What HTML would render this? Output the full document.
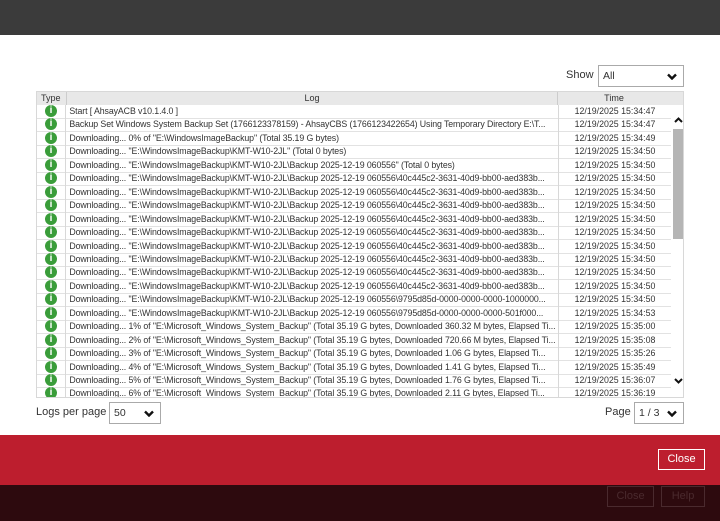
<!DOCTYPE html><html><head><style>
*{margin:0;padding:0;box-sizing:border-box}
body{width:720px;height:521px;overflow:hidden;background:#fff;font-family:"Liberation Sans",sans-serif;position:relative}
.top{position:absolute;left:0;top:0;width:720px;height:35px;background:#3b3b3b}
.red{position:absolute;left:0;top:435px;width:720px;height:50px;background:#bd1e2e}
.dark{position:absolute;left:0;top:485px;width:720px;height:36px;background:#2d0a0e}
.btn{position:absolute;font-size:11px;text-align:center}
.tbl{position:absolute;left:36px;top:91px;width:648px;height:307px;border:1px solid #d8d8d8;overflow:hidden}
.row{position:absolute;left:0;height:14px;width:634px;font-size:8.8px;line-height:13px;color:#333;border-bottom:1px solid #e2e2e2;white-space:nowrap}
.row .t{position:absolute;left:0;width:29px;height:14px;border-right:1px solid #d8d8d8}
.row .l{position:absolute;left:30px;width:490px;overflow:hidden;height:13px;letter-spacing:-0.1px}
.row .tm{position:absolute;left:521px;width:113px;text-align:center;border-left:1px solid #d8d8d8;height:14px}
.ic{position:absolute;left:8px;top:0px;width:12px;height:12px;border-radius:50%;background:#3a9d3a;color:#fff;font-size:10px;font-weight:bold;line-height:12px;text-align:center}
.hdr{position:absolute;left:0;top:0;width:656px;height:13px;background:#e8e8e8;font-size:9px;line-height:13px;color:#333}
.sel{position:absolute;border:1px solid #aaa;font-size:10.5px;color:#333;padding-left:4px;background:#fff}
.sel svg{position:absolute;right:6px;top:7px}
</style></head><body>
<div class="top"></div>
<div style="position:absolute;left:566px;top:69px;font-size:11px;color:#333">Show</div>
<div class="sel" style="left:598px;top:65px;width:86px;height:22px;line-height:20px">All<svg width="10" height="7" viewBox="0 0 10 7"><path d="M1 1.5L5 5.5L9 1.5" stroke="#111" stroke-width="2.4" fill="none"/></svg></div>
<div class="tbl">
<div class="hdr"><span style="position:absolute;left:4px">Type</span><span style="position:absolute;left:29px;width:491px;text-align:center;border-left:1px solid #ccc">Log</span><span style="position:absolute;left:520px;width:113px;text-align:center;border-left:1px solid #ccc">Time</span></div>
<div id="rows"></div>
<div style="position:absolute;left:634px;top:13px;width:14px;height:294px;background:#fff"></div>
<svg style="position:absolute;left:637px;top:25px" width="9" height="6" viewBox="0 0 9 6"><path d="M1 5L4.5 1.5L8 5" stroke="#111" stroke-width="2" fill="none"/></svg>
<div style="position:absolute;left:636px;top:37px;width:11px;height:110px;background:#b5b5b5"></div>
<svg style="position:absolute;left:637px;top:286px" width="9" height="6" viewBox="0 0 9 6"><path d="M1 1L4.5 4.5L8 1" stroke="#111" stroke-width="2" fill="none"/></svg>
</div>
<div style="position:absolute;left:36px;top:406px;font-size:11px;color:#333">Logs per page</div>
<div class="sel" style="left:109px;top:402px;width:52px;height:22px;line-height:20px">50<svg width="10" height="7" viewBox="0 0 10 7"><path d="M1 1.5L5 5.5L9 1.5" stroke="#111" stroke-width="2.4" fill="none"/></svg></div>
<div style="position:absolute;left:605px;top:406px;font-size:11px;color:#333">Page</div>
<div class="sel" style="left:634px;top:402px;width:50px;height:22px;line-height:20px">1 / 3<svg width="10" height="7" viewBox="0 0 10 7"><path d="M1 1.5L5 5.5L9 1.5" stroke="#111" stroke-width="2.4" fill="none"/></svg></div>
<div class="red"></div>
<div class="btn" style="left:658px;top:449px;width:47px;height:21px;border:1px solid #fff;color:#fff;line-height:19px">Close</div>
<div class="dark"></div>
<div class="btn" style="left:607px;top:486px;width:47px;height:21px;border:1px solid #4a2a2e;color:#4a2a2e;line-height:19px">Close</div>
<div class="btn" style="left:661px;top:486px;width:44px;height:21px;border:1px solid #4a2a2e;color:#4a2a2e;line-height:19px">Help</div>
<script>
var K='Downloading... "E:\\WindowsImageBackup\\KMT-W10-2JL\\Backup 2025-12-19 060556\\';
var M='Downloading... ',S='% of "E:\\Microsoft_Windows_System_Backup" (Total 35.19 G bytes, Downloaded ';
var d=[
['Start [ AhsayACB v10.1.4.0 ]','34:47'],
['Backup Set Windows System Backup Set (1766123378159) - AhsayCBS (1766123422654) Using Temporary Directory E:\\T...','34:47'],
['Downloading... 0% of "E:\\WindowsImageBackup" (Total 35.19 G bytes)','34:49'],
['Downloading... "E:\\WindowsImageBackup\\KMT-W10-2JL" (Total 0 bytes)','34:50'],
['Downloading... "E:\\WindowsImageBackup\\KMT-W10-2JL\\Backup 2025-12-19 060556" (Total 0 bytes)','34:50']];
for(var i=0;i<9;i++)d.push([K+'40c445c2-3631-40d9-bb00-aed383b...','34:50']);
d.push([K+'9795d85d-0000-0000-0000-1000000...','34:50']);
d.push([K+'9795d85d-0000-0000-0000-501f000...','34:53']);
var p=[['1','360.32 M','35:00'],['2','720.66 M','35:08'],['3','1.06 G','35:26'],['4','1.41 G','35:49'],['5','1.76 G','36:07'],['6','2.11 G','36:19']];
p.forEach(function(x){d.push([M+x[0]+S+x[1]+' bytes, Elapsed Ti...',x[2]])});
var h='';d.forEach(function(r,i){h+='<div class="row" style="top:'+(Math.round(13+i*13.45))+'px"><div class="t"><div class="ic">i</div></div><div class="l">&nbsp;'+r[0].replace(/</g,'&lt;')+'</div><div class="tm">12/19/2025 15:'+r[1]+'</div></div>'});
document.getElementById('rows').innerHTML=h;
</script>
</body></html>
